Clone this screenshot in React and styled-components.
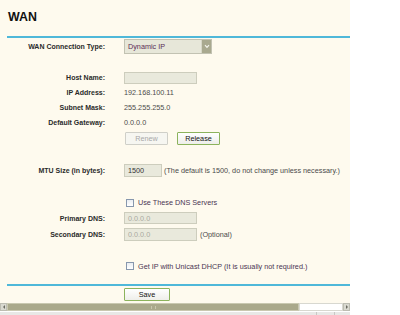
import React from "react";
import styled, { createGlobalStyle } from "styled-components";

const Global = createGlobalStyle`
  html, body { margin: 0; padding: 0; background: #ffffff; }
  body { font-family: "Liberation Sans", Arial, sans-serif; }
`;

const Page = styled.div`
  width: 350px;
  background: #fefaee;
  display: flex;
  flex-direction: column;
`;

const Title = styled.h1`
  margin: 0;
  height: 36px;
  box-sizing: border-box;
  padding: 10px 0 0 8px;
  font-size: 12.4px;
  line-height: 14px;
  font-weight: bold;
  color: #111;
`;

const Rule = styled.div`
  height: 2px;
  margin-left: 7px;
  background: #4fb8d9;
`;

const Row = styled.div`
  display: grid;
  grid-template-columns: 105px auto;
  column-gap: 19px;
  align-items: center;
  height: ${(p) => p.$h}px;
  margin-top: ${(p) => p.$mt || 0}px;
`;

const Label = styled.div`
  text-align: right;
  font-size: 7px;
  font-weight: bold;
  color: #2a2a2a;
  white-space: nowrap;
`;

const Cell = styled.div`
  display: flex;
  align-items: center;
  gap: ${(p) => p.$gap || 0}px;
  font-size: 7.25px;
  color: #4a4a4a;
  white-space: nowrap;
`;

const Value = styled.span`
  font-size: 7.25px;
  color: #4c4c4c;
`;

const Select = styled.div`
  width: 88px;
  height: 15px;
  box-sizing: border-box;
  border: 1px solid #c2c2b2;
  background: #e7e7d9;
  display: flex;
  align-items: center;
  justify-content: space-between;
  padding-left: 3px;
  font-size: 7.25px;
  color: #5b2c55;
`;

const SelectArrow = styled.div`
  width: 9px;
  height: 13px;
  background: #a9a98f;
  border-left: 1px solid #d6d6c6;
  display: flex;
  align-items: center;
  justify-content: center;
`;

const Input = styled.div`
  width: ${(p) => p.$w}px;
  height: ${(p) => p.$ht || 12}px;
  box-sizing: border-box;
  border: 1px solid #cdcdbd;
  background: #e9e9dc;
  display: flex;
  align-items: center;
  padding-left: 3px;
  font-size: 7.25px;
  color: ${(p) => (p.$muted ? "#aaa9a0" : "#333")};
`;

const Button = styled.div`
  width: ${(p) => p.$w}px;
  height: 13px;
  box-sizing: border-box;
  display: flex;
  align-items: center;
  justify-content: center;
  font-size: 7.25px;
  border-radius: 1px;
  ${(p) =>
    p.$disabled
      ? `border: 1px solid #cfcfc8; background: #f6f6f1; color: #a8a8a8;`
      : `border: 1.5px solid #8cb35c; background: linear-gradient(#ffffff, #eeeeea); color: #111;`}
`;

const Check = styled.div`
  width: 8px;
  height: 8px;
  box-sizing: border-box;
  border: 1px solid #8797ad;
  background: linear-gradient(#e9edf2, #ffffff);
  margin-left: 2px;
`;

const CheckText = styled.span`
  font-size: 7.25px;
  color: #4a3552;
`;

const Scrollbar = styled.div`
  display: flex;
  height: 8px;
  margin-top: 1px;
  background: #f0f0ea;
`;

const ArrowBtn = styled.div`
  width: 7px;
  height: 8px;
  box-sizing: border-box;
  background: #d9d9d0;
  border: 1px solid #bdbdb2;
  display: flex;
  align-items: center;
  justify-content: center;
`;

const Thumb = styled.div`
  width: 292px;
  height: 8px;
  box-sizing: border-box;
  background: #aaa98b;
  border: 1px solid #c9c8b0;
  display: flex;
  align-items: center;
  justify-content: center;
`;

const Grip = styled.div`
  width: 3px;
  height: 3px;
  border-left: 1px solid #c8c7ad;
  border-right: 1px solid #c8c7ad;
`;

const Track = styled.div`
  flex: 1;
  height: 8px;
  box-sizing: border-box;
  background: #ffffff;
  border: 1px solid #d8d8d0;
`;

const Status = styled.div`
  height: 5px;
  background: #e8e8e6;
  border-top: 1px solid #ffffff;
  display: flex;
  justify-content: flex-end;
`;

const StatusCell = styled.div`
  width: ${(p) => p.$w}px;
  border-left: 1px solid #c8c8c4;
`;

const Tri = ({ dir }) => (
  <svg width="4" height="4" viewBox="0 0 4 4">
    {dir === "left" ? (
      <polygon points="3,0 3,4 1,2" fill="#6a6a60" />
    ) : (
      <polygon points="1,0 1,4 3,2" fill="#6a6a60" />
    )}
  </svg>
);

export default function App() {
  return (
    <>
      <Global />
      <Page>
        <Title>WAN</Title>
        <Rule />
        <Row $h={17}>
          <Label>WAN Connection Type:</Label>
          <Cell>
            <Select>
              Dynamic IP
              <SelectArrow>
                <svg width="6" height="5" viewBox="0 0 6 5">
                  <path d="M1 1.2 L3 3.4 L5 1.2" stroke="#f4f4ec" strokeWidth="1.2" fill="none" />
                </svg>
              </SelectArrow>
            </Select>
          </Cell>
        </Row>
        <Row $h={15} $mt={15}>
          <Label>Host Name:</Label>
          <Cell>
            <Input $w={73} $ht={12} />
          </Cell>
        </Row>
        <Row $h={15}>
          <Label>IP Address:</Label>
          <Cell><Value>192.168.100.11</Value></Cell>
        </Row>
        <Row $h={15}>
          <Label>Subnet Mask:</Label>
          <Cell><Value>255.255.255.0</Value></Cell>
        </Row>
        <Row $h={15}>
          <Label>Default Gateway:</Label>
          <Cell><Value>0.0.0.0</Value></Cell>
        </Row>
        <Row $h={17}>
          <Label />
          <Cell $gap={9}>
            <Button $w={43} $disabled style={{ marginLeft: 1 }}>Renew</Button>
            <Button $w={43}>Release</Button>
          </Cell>
        </Row>
        <Row $h={17} $mt={15}>
          <Label>MTU Size (in bytes):</Label>
          <Cell $gap={2}>
            <Input $w={38} $ht={13}>1500</Input>
            <span>(The default is 1500, do not change unless necessary.)</span>
          </Cell>
        </Row>
        <Row $h={15} $mt={16}>
          <Label />
          <Cell $gap={4}>
            <Check />
            <CheckText>Use These DNS Servers</CheckText>
          </Cell>
        </Row>
        <Row $h={16}>
          <Label>Primary DNS:</Label>
          <Cell>
            <Input $w={73} $muted>0.0.0.0</Input>
          </Cell>
        </Row>
        <Row $h={16}>
          <Label>Secondary DNS:</Label>
          <Cell $gap={3}>
            <Input $w={73} $ht={13} $muted>0.0.0.0</Input>
            <span>(Optional)</span>
          </Cell>
        </Row>
        <Row $h={16} $mt={16}>
          <Label />
          <Cell $gap={4}>
            <Check />
            <CheckText>Get IP with Unicast DHCP (It is usually not required.)</CheckText>
          </Cell>
        </Row>
        <Rule style={{ marginTop: 10 }} />
        <Row $h={16}>
          <Label />
          <Cell>
            <Button $w={46}>Save</Button>
          </Cell>
        </Row>
        <Scrollbar>
          <ArrowBtn><Tri dir="left" /></ArrowBtn>
          <Thumb><Grip /></Thumb>
          <Track />
          <ArrowBtn><Tri dir="right" /></ArrowBtn>
        </Scrollbar>
        <Status>
          <StatusCell $w={17} />
          <StatusCell $w={15} />
        </Status>
      </Page>
    </>
  );
}
